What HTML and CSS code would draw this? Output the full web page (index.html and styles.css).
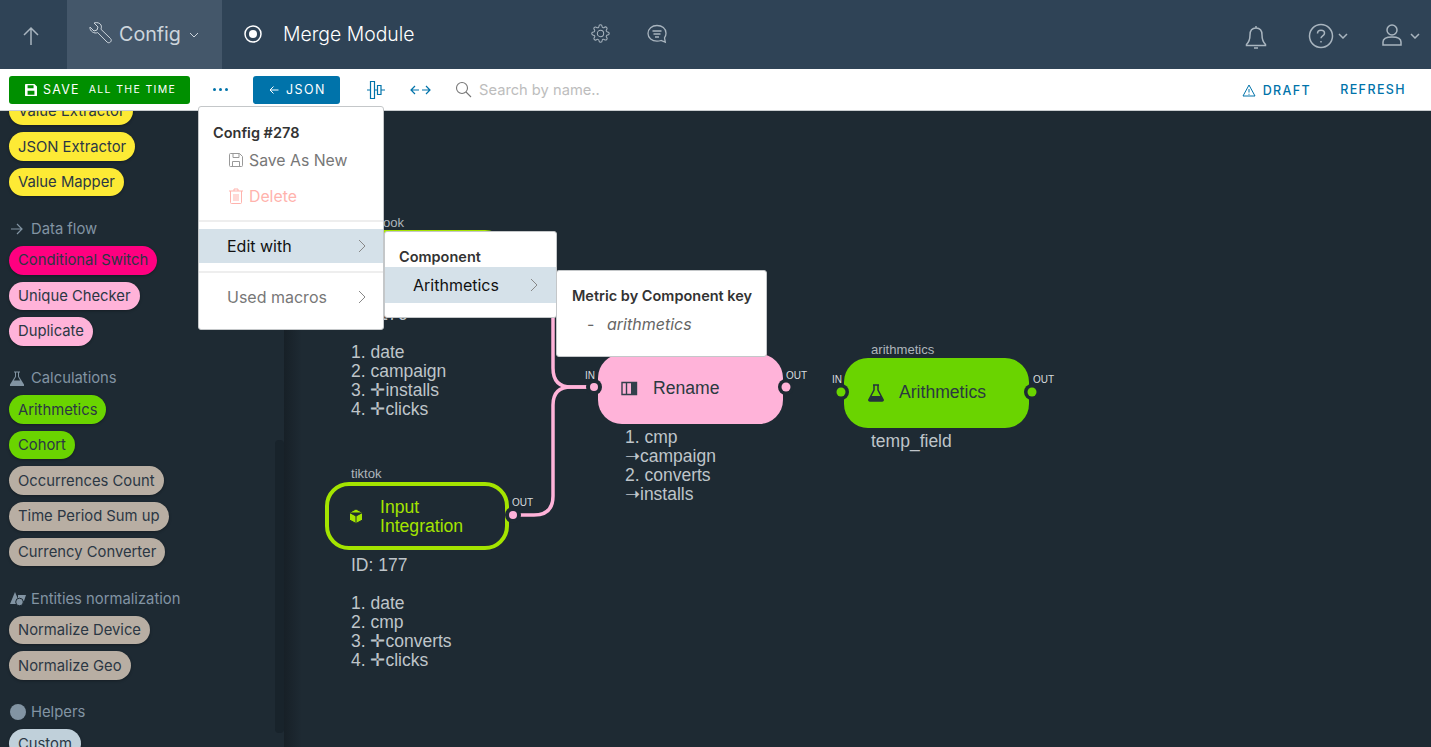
FILE: index.html
```html
<!DOCTYPE html>
<html>
<head>
	<meta charset="UTF-8">
	<title>Merge Module</title>
	<link rel="stylesheet" href="styles.css">
</head>
<body>
	<header class="topbar">
		<a class="nav-up">
			<svg width="18" height="20" viewBox="0 0 18 20"><path d="M9 19V2M2 9l7-7 7 7"/></svg>
		</a>
		<a class="nav-config">
			<svg width="25" height="25" viewBox="0 0 25 25"><path d="M2 6l4 4 3-1 1-3-4-4c3-1 6 0 7 2 .6 1.400 .5 3-.1 4.200L22.500 17.500c1 1 1 2.500 0 3.500s-2.500 1-3.500 0L9.700 11.600C8 12.300 6 12 4.500 11 2.800 9.800 1.600 8 2 6z"/></svg>
			<span class="nav-config-label">Config</span>
			<svg class="chev" width="10" height="6" viewBox="0 0 10 6"><path d="M1 1l4 4 4-4"/></svg>
		</a>
		<div class="nav-title">
			<svg width="20" height="20" viewBox="0 0 20 20"><circle class="ring" cx="10" cy="10" r="8"/><circle class="dot" cx="10" cy="10" r="4"/></svg>
			<span>Merge Module</span>
		</div>
		<div class="nav-tools">
			<svg width="19" height="19" viewBox="0 0 24 24"><circle cx="12" cy="12" r="4"/><path d="M19.400 15a1.650 1.650 0 0 0 .33 1.820l.06.06a2 2 0 0 1 0 2.830 2 2 0 0 1-2.830 0l-.06-.06a1.650 1.650 0 0 0-1.820-.33 1.650 1.650 0 0 0-1 1.510V21a2 2 0 0 1-2 2 2 2 0 0 1-2-2v-.09A1.650 1.650 0 0 0 9 19.400a1.650 1.650 0 0 0-1.820.33l-.06.06a2 2 0 0 1-2.830 0 2 2 0 0 1 0-2.830l.06-.06a1.650 1.650 0 0 0 .33-1.820 1.650 1.650 0 0 0-1.510-1H3a2 2 0 0 1-2-2 2 2 0 0 1 2-2h.09A1.650 1.650 0 0 0 4.600 9a1.650 1.650 0 0 0-.33-1.820l-.06-.06a2 2 0 0 1 0-2.830 2 2 0 0 1 2.830 0l.06.06a1.650 1.650 0 0 0 1.820.33H9a1.650 1.650 0 0 0 1-1.510V3a2 2 0 0 1 2-2 2 2 0 0 1 2 2v.09a1.650 1.650 0 0 0 1 1.510 1.650 1.650 0 0 0 1.820-.33l.06-.06a2 2 0 0 1 2.830 0 2 2 0 0 1 0 2.830l-.06.06a1.650 1.650 0 0 0-.33 1.820V9a1.650 1.650 0 0 0 1.510 1H21a2 2 0 0 1 2 2 2 2 0 0 1-2 2h-.09a1.650 1.650 0 0 0-1.510 1z"/></svg>
			<svg width="20" height="20" viewBox="0 0 20 20"><path d="M10 1.500c5 0 9 3 9 7.700 0 2-.7 3.500-1.500 4.600l.8 4.400-4.300-1.700c-1.200.4-2.500.6-4 .6-5 0-9-3.100-9-7.600s4-8 9-8z"/><path d="M5.500 7h9M6.500 10h7M8 13h4"/></svg>
		</div>
		<div class="nav-user">
			<svg class="bell" width="26" height="26" viewBox="0 0 26 26"><path d="M13 2v2M13 4c-4 0-6 3-6 7 0 5-1 7-3.500 9.500v1h19v-1C20 18 19 16 19 11c0-4-2-7-6-7zM11 24h4"/></svg>
			<div class="nav-menu">
				<svg width="26" height="26" viewBox="0 0 26 26"><circle cx="13" cy="13" r="11.500"/><path d="M9.500 10.500c0-2 1.500-3.200 3.500-3.200s3.500 1.200 3.500 3c0 2.500-3.500 2.700-3.500 5M13 18v1.500"/></svg>
				<svg class="chev" width="10" height="6" viewBox="0 0 10 6"><path d="M1 1l4 4 4-4"/></svg>
			</div>
			<div class="nav-menu nav-menu-user">
				<svg width="22" height="26" viewBox="0 0 22 26"><circle cx="11" cy="7" r="5"/><path d="M2 22v-3c0-3 3-5 9-5s9 2 9 5v3z"/></svg>
				<svg class="chev" width="10" height="6" viewBox="0 0 10 6"><path d="M1 1l4 4 4-4"/></svg>
			</div>
		</div>
	</header>

	<div class="toolbar">
		<button class="btn-save">
			<svg width="14" height="14" viewBox="0 0 14 14"><path d="M1 0h10l3 3v10a1 1 0 0 1-1 1H1a1 1 0 0 1-1-1V1a1 1 0 0 1 1-1zm2 1.500v3.500h7V1.500zM3 8v4.500h8V8z" fill-rule="evenodd"/></svg>
			<span class="save-main">SAVE</span>
			<span class="save-sub">ALL THE TIME</span>
		</button>
		<div class="dots"><i></i><i></i><i></i></div>
		<button class="btn-json">
			<svg width="10" height="10" viewBox="0 0 10 10"><path d="M9.500 5H1M4.500 1.500L1 5l3.500 3.500"/></svg>
			<span>JSON</span>
		</button>
		<svg class="tool-align" width="18" height="18" viewBox="0 0 18 18"><path d="M3.500 .5h4v17h-4zM10.500 4.500h3.500v9h-3.500zM0 9h3.500M7.500 9h3M14 9h4"/></svg>
		<svg class="tool-arrows" width="21" height="10" viewBox="0 0 21 10"><path d="M1 5h8M12 5h8M5 1L1 5l4 4M16 1l4 4-4 4"/></svg>
		<div class="search">
			<svg width="17" height="17" viewBox="0 0 17 17"><circle cx="7" cy="7" r="5.500"/><path d="M11 11l5 5"/></svg>
			<span>Search by name..</span>
		</div>
		<div class="toolbar-right">
			<a class="link-draft">
				<svg width="14" height="13" viewBox="0 0 14 13"><path d="M7 1l6 11H1zM7 5v3.500M7 9.800v1"/></svg>
				DRAFT
			</a>
			<a class="link-refresh">REFRESH</a>
		</div>
	</div>

	<div class="workspace">
		<aside class="sidebar">
			<div class="sidebar-list">
				<span class="pill yellow">Value Extractor</span>
				<span class="pill yellow">JSON Extractor</span>
				<span class="pill yellow">Value Mapper</span>

				<div class="group-title">
					<svg width="13" height="12" viewBox="0 0 13 12"><path d="M1 6h11M7 1l5 5-5 5"/></svg>
					Data flow
				</div>
				<span class="pill hot">Conditional Switch</span>
				<span class="pill pink">Unique Checker</span>
				<span class="pill pink">Duplicate</span>

				<div class="group-title">
					<svg class="solid" width="14" height="15" viewBox="0 0 14 15"><path d="M4 .5h6v1H9v4l5 8v1.500H0V13.500l5-8v-4H4zM6 1.500v4.300L3.800 9.500h6.400L8 5.800V1.500z" fill-rule="evenodd"/></svg>
					Calculations
				</div>
				<span class="pill green">Arithmetics</span>
				<span class="pill green">Cohort</span>
				<span class="pill tan">Occurrences Count</span>
				<span class="pill tan">Time Period Sum up</span>
				<span class="pill tan">Currency Converter</span>

				<div class="group-title">
					<svg class="solid" width="16" height="14" viewBox="0 0 16 14"><path d="M5 0l5 12H0z"/><path d="M8 3h8l-2 6H8z"/><circle class="ent-dot" cx="9.500" cy="10" r="3.800"/></svg>
					Entities normalization
				</div>
				<span class="pill tan">Normalize Device</span>
				<span class="pill tan">Normalize Geo</span>

				<div class="group-title">
					<svg class="solid" width="16" height="16" viewBox="0 0 16 16"><circle cx="8" cy="8" r="8"/></svg>
					Helpers
				</div>
				<span class="pill ice">Custom</span>
			</div>
			<div class="scroll-thumb"></div>
		</aside>

		<main class="canvas">
			<svg class="graph" viewBox="284 111 1147 636" width="1147" height="636">
				<path class="wire" d="M513 515H534Q553 515 553 496V405Q553 387 571 387H594"/>
				<path class="wire" d="M553 264V368Q553 387 571 387H594"/>

				<text class="node-key" x="351" y="227">facebook</text>
				<rect class="node-outline" x="327" y="232" width="180" height="64" rx="22"/>
				<text class="node-list" x="351" y="320">ID: 176</text>
				<text class="node-list" x="351" y="358">1. date</text>
				<text class="node-list" x="351" y="377">2. campaign</text>
				<text class="node-list" x="351" y="396">3. ✛installs</text>
				<text class="node-list" x="351" y="415">4. ✛clicks</text>

				<text class="node-key" x="351" y="478">tiktok</text>
				<rect class="node-outline" x="327" y="484" width="180" height="64" rx="22"/>
				<circle class="notch" cx="513" cy="515" r="8"/>
				<circle class="port-pink" cx="513" cy="515" r="4"/>
				<text class="port-label" x="512" y="506">OUT</text>
				<path class="cube" d="M356 509l6.500 3.500v7.500l-6.500 3.500-6.500-3.500v-7.500zM356 516v7.500M349.500 512.500l6.500 3.500 6.500-3.500"/>
				<text class="node-name lime" x="380" y="513">Input</text>
				<text class="node-name lime" x="380" y="532">Integration</text>
				<text class="node-list" x="351" y="571">ID: 177</text>
				<text class="node-list" x="351" y="609">1. date</text>
				<text class="node-list" x="351" y="628">2. cmp</text>
				<text class="node-list" x="351" y="647">3. ✛converts</text>
				<text class="node-list" x="351" y="666">4. ✛clicks</text>

				<rect class="fill-pink" x="598" y="354" width="185" height="70" rx="24"/>
				<circle class="notch" cx="594" cy="387" r="8"/>
				<circle class="notch" cx="786" cy="387" r="8"/>
				<circle class="port-pink" cx="594" cy="387" r="4"/>
				<circle class="port-pink" cx="786" cy="387" r="4.500"/>
				<text class="port-label" x="585" y="379">IN</text>
				<text class="port-label" x="786" y="379">OUT</text>
				<path class="columns" d="M622 382.500h14.500v12H622zM626.500 382.500v12"/>
				<rect class="columns-fill" x="631" y="382.500" width="5.500" height="12"/>
				<text class="node-name" x="653" y="394">Rename</text>
				<text class="node-list" x="625" y="443">1. cmp</text>
				<text class="node-list" x="625" y="462">➝campaign</text>
				<text class="node-list" x="625" y="481">2. converts</text>
				<text class="node-list" x="625" y="500">➝installs</text>

				<text class="node-key" x="871" y="354">arithmetics</text>
				<rect class="fill-green" x="844" y="358" width="185" height="70" rx="24"/>
				<circle class="notch" cx="841" cy="392" r="8"/>
				<circle class="notch" cx="1032" cy="392" r="8"/>
				<circle class="port-green" cx="841" cy="392" r="4.500"/>
				<circle class="port-green" cx="1032" cy="392" r="4.500"/>
				<text class="port-label" x="832" y="383">IN</text>
				<text class="port-label" x="1033" y="383">OUT</text>
				<path class="flask" d="M873 385h6M874 385v5l-5 9.500a1 1 0 0 0 1 1.500h12a1 1 0 0 0 1-1.500L878 390v-5"/>
				<path class="flask-fill" d="M871 396h10l2.500 5h-15z"/>
				<text class="node-name" x="899" y="398">Arithmetics</text>
				<text class="node-list" x="871" y="447">temp_field</text>
			</svg>
		</main>
	</div>

	<div class="menu menu-config">
		<div class="menu-head">Config #278</div>
		<div class="menu-item">
			<svg width="14" height="14" viewBox="0 0 14 14"><path d="M1.500.5h9l3 3v9a1 1 0 0 1-1 1h-11a1 1 0 0 1-1-1v-11a1 1 0 0 1 1-1zM4 .5v4h6v-4M3.500 13.500v-5h7v5"/></svg>
			Save As New
		</div>
		<div class="menu-item danger">
			<svg width="14" height="16" viewBox="0 0 14 16"><path d="M0 3h14M5 3V1h4v2M1.500 3v11.500a1 1 0 0 0 1 1h9a1 1 0 0 0 1-1V3M5 6v7M7 6v7M9 6v7"/></svg>
			Delete
		</div>
		<div class="menu-rule"></div>
		<div class="menu-row active">Edit with
			<svg width="8" height="14" viewBox="0 0 8 14"><path d="M1 1l6 6-6 6"/></svg>
		</div>
		<div class="menu-rule menu-rule-low"></div>
		<div class="menu-row">Used macros
			<svg width="8" height="14" viewBox="0 0 8 14"><path d="M1 1l6 6-6 6"/></svg>
		</div>
	</div>

	<div class="menu menu-component">
		<div class="menu-head">Component</div>
		<div class="menu-row active">Arithmetics
			<svg width="8" height="14" viewBox="0 0 8 14"><path d="M1 1l6 6-6 6"/></svg>
		</div>
	</div>

	<div class="menu menu-metric">
		<div class="menu-head">Metric by Component key</div>
		<div class="metric-item"><span class="metric-dash">-</span><em>arithmetics</em></div>
	</div>
</body>
</html>
```
FILE: styles.css
```css
* {
	box-sizing: border-box;
}
html, body {
	height: 100%;
	margin: 0;
}
body {
	position: relative;
	display: flex;
	flex-direction: column;
	height: 747px;
	overflow: hidden;
	font-family: "Inter", "Liberation Sans", sans-serif;
	background-color: #1e2a33;
}
svg {
	fill: none;
	stroke: currentColor;
	flex: none;
}

/* top bar */
.topbar {
	display: flex;
	align-items: stretch;
	flex: none;
	height: 69px;
	background-color: #2f4356;
	color: #a9b5bf;
}
.nav-up {
	display: flex;
	align-items: center;
	justify-content: center;
	width: 67px;
	padding: 3px 5px 0 0;
}
.nav-up svg {
	stroke-width: 1.5;
}
.nav-config {
	display: flex;
	align-items: center;
	width: 155px;
	padding-left: 21px;
	padding-bottom: 2px;
	background-color: #44576a;
	color: #cdd5dc;
}
.nav-config-label {
	margin-left: 6px;
	font-size: 19.700px;
}
.nav-config .chev {
	margin: 3px 0 0 8px;
}
.nav-title {
	display: flex;
	align-items: center;
	width: 368px;
	padding-left: 21px;
	padding-bottom: 2px;
	color: #fff;
	font-size: 19.400px;
	font-weight: 300;
}
.nav-title span {
	margin-left: 20px;
}
.nav-title .ring {
	stroke-width: 1.5;
}
.nav-title .dot {
	fill: #fff;
	stroke: none;
}
.nav-tools {
	display: flex;
	align-items: center;
	gap: 37px;
	padding: 0 0 2px 1px;
}
.nav-tools svg {
	stroke-width: 1.300;
}
.nav-user {
	display: flex;
	align-items: center;
	margin-left: auto;
	padding: 2px 11px 0 0;
}
.bell {
	margin-right: 39px;
	margin-top: 2px;
	stroke-width: 1.500;
}
.nav-menu {
	display: flex;
	align-items: center;
	gap: 4px;
}
.nav-menu-user {
	gap: 7px;
	margin-left: 33px;
}
.nav-menu svg {
	stroke-width: 1.500;
}

/* toolbar */
.toolbar {
	display: flex;
	align-items: center;
	flex: none;
	height: 42px;
	padding: 0 25px 0 9px;
	background-color: #fff;
	border-bottom: 1px solid #c9cdd0;
	color: #0073aa;
}
.toolbar button {
	display: flex;
	align-items: center;
	height: 28px;
	border: 0;
	border-radius: 3px;
	color: #fff;
	font-family: "Inter", "Liberation Sans", sans-serif;
}
.btn-save {
	width: 181px;
	padding: 0 0 0 16px;
	background-color: #008f00;
}
.btn-save svg {
	fill: #fff;
	stroke: none;
	width: 12px;
	height: 12px;
}
.save-main {
	margin-left: 6px;
	font-size: 12.500px;
	letter-spacing: 1.200px;
}
.save-sub {
	margin-left: 9px;
	font-size: 10.500px;
	letter-spacing: 1.350px;
}
.dots {
	display: flex;
	gap: 3px;
	width: 17px;
	margin-left: 23px;
}
.dots i {
	width: 3px;
	height: 3px;
	border-radius: 50%;
	background-color: #0073aa;
}
.btn-json {
	width: 87px;
	margin-left: 23px;
	padding: 0 0 0 16px;
	background-color: #0073aa;
}
.btn-json span {
	margin-left: 7px;
	font-size: 12.500px;
	letter-spacing: 1.400px;
}
.tool-align {
	margin-left: 27px;
}
.tool-arrows {
	margin-left: 25px;
}
.toolbar .tool-align,
.toolbar .tool-arrows {
	stroke-width: 1.200;
}
.search {
	display: flex;
	align-items: center;
	gap: 7px;
	margin-left: 24px;
	color: #bdbdbd;
	font-size: 14.700px;
}
.search svg {
	stroke: #777;
	stroke-width: 1.100;
}
.toolbar-right {
	display: flex;
	align-items: center;
	gap: 29px;
	margin-left: auto;
	font-size: 12.500px;
	font-weight: 500;
	letter-spacing: 1.400px;
}
.link-draft {
	display: flex;
	align-items: center;
	gap: 7px;
	padding-top: 2px;
}

/* sidebar */
.workspace {
	display: flex;
	flex: 1;
	min-height: 0;
}
.sidebar {
	position: relative;
	flex: none;
	width: 284px;
	overflow: hidden;
	background-color: #1e2a33;
}
.sidebar-list {
	display: flex;
	flex-direction: column;
	align-items: flex-start;
	gap: 7px;
	margin-top: -14.300px;
	padding-left: 9px;
}
.pill {
	display: flex;
	align-items: center;
	height: 28.600px;
	padding: 0 9px;
	border-radius: 15px;
	box-shadow: 0 1px 3px rgba(0, 0, 0, 0.3);
	color: #2b3744;
	font-size: 14.800px;
	white-space: nowrap;
}
.yellow { background-color: #fdea35; }
.hot { background-color: #ff0080; }
.pink { background-color: #ffb3d9; }
.green { background-color: #6ad400; }
.tan { background-color: #b8aea3; }
.ice { background-color: #c0d0da; }
.group-title {
	display: grid;
	grid-template-columns: 21px auto;
	align-items: center;
	height: 20px;
	margin-top: 15.500px;
	padding-left: 1px;
	color: #8294a3;
	font-size: 14.800px;
}
.group-title svg {
	stroke-width: 1.200;
}
.group-title .solid {
	fill: #8294a3;
	stroke: none;
}
.group-title .ent-dot {
	stroke: #1e2a33;
	stroke-width: 1;
}
.scroll-thumb {
	position: absolute;
	top: 329px;
	right: 0;
	width: 9px;
	height: 293px;
	border-radius: 4px;
	background-color: #18232b;
}

/* canvas */
.canvas {
	flex: 1;
	min-width: 0;
	background: linear-gradient(to right, #172027, #1e2a33 18px);
}
.graph {
	display: block;
	font-family: "Liberation Sans", sans-serif;
}
.graph text {
	stroke: none;
}
.wire {
	stroke: #ffb3d9;
	stroke-width: 3.500;
}
.notch {
	fill: #1e2a33;
	stroke: none;
}
.port-pink {
	fill: #ffb3d9;
	stroke: none;
}
.port-green {
	fill: #6ad400;
	stroke: none;
}
.fill-pink {
	fill: #ffb3d9;
	stroke: none;
}
.fill-green {
	fill: #6ad400;
	stroke: none;
}
.node-outline {
	fill: #1e2a33;
	stroke: #a4e400;
	stroke-width: 4;
}
.node-key {
	fill: #aeb5bb;
	font-size: 13.100px;
}
.port-label {
	fill: #d8dcdf;
	font-size: 10px;
}
.node-list {
	fill: #bfc5ca;
	font-size: 17.500px;
}
.node-name {
	fill: #2b3a40;
	font-size: 17.600px;
}
.node-name.lime {
	fill: #a4e400;
}
.cube {
	fill: #a4e400;
	stroke: #1e2a33;
	stroke-width: 1;
}
.columns {
	stroke: #33404c;
	stroke-width: 1.400;
}
.columns-fill {
	fill: #33404c;
	stroke: none;
}
.flask {
	stroke: #25323d;
	stroke-width: 1.500;
}
.flask-fill {
	fill: #25323d;
	stroke: none;
}

/* menus */
.menu {
	position: absolute;
	background-color: #fff;
	border: 1px solid #c4c7c9;
	border-radius: 3px;
	color: #777;
	font-size: 16px;
}
.menu svg {
	stroke: #999;
}
.menu-head {
	color: #333;
	font-size: 14.500px;
	font-weight: 600;
	line-height: 18px;
}
.menu-config {
	top: 106px;
	left: 198px;
	width: 186px;
	height: 224px;
	padding-top: 17px;
}
.menu-config .menu-head {
	padding-left: 14px;
}
.menu-item {
	display: flex;
	align-items: center;
	gap: 6px;
	height: 36px;
	padding-left: 30px;
	font-size: 15.800px;
}
.menu-item.danger {
	color: #ffb3ad;
}
.menu-item.danger svg {
	stroke: #ffb3ad;
}
.menu-rule {
	height: 2px;
	margin-top: 6px;
	margin-bottom: 7px;
	background-color: #eee;
}
.menu-rule-low {
	margin-top: 8px;
}
.menu-row {
	display: flex;
	align-items: center;
	justify-content: space-between;
	height: 34px;
	padding: 0 17px 0 28px;
}
.menu-row.active {
	background-color: #d5e1e9;
	color: #111;
}
.menu-row svg {
	stroke: #888;
}
.menu-component {
	top: 231px;
	left: 384px;
	width: 173px;
	height: 87px;
	padding-top: 16px;
}
.menu-component .menu-head {
	padding-left: 14px;
	margin-bottom: 1px;
}
.menu-component .menu-row {
	height: 36px;
	padding: 0 18px 0 28px;
}
.menu-metric {
	top: 270px;
	left: 556px;
	width: 211px;
	height: 87px;
	padding: 16px 0 0 15px;
}
.metric-item {
	display: flex;
	margin-top: 9px;
	color: #666;
}
.metric-dash {
	width: 20px;
	padding-left: 15px;
	box-sizing: content-box;
}
```
